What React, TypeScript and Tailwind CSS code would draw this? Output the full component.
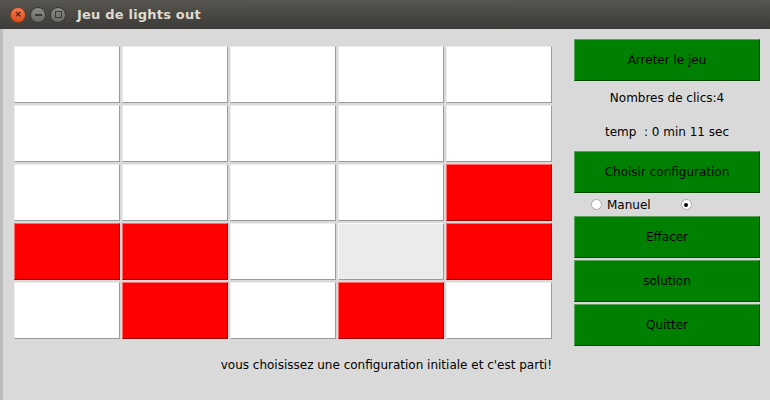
import React from 'react';

// 0 = off (white), 1 = on (red), 2 = hovered cell
const grid: number[][] = [
  [0, 0, 0, 0, 0],
  [0, 0, 0, 0, 0],
  [0, 0, 0, 0, 1],
  [1, 1, 0, 2, 1],
  [0, 1, 0, 1, 0],
];

const Cell: React.FC<{ state: number }> = ({ state }) => {
  if (state === 1) {
    return <div className="h-[57px] w-[106px] bg-[#ff0000] border border-t-[#ff6b6b] border-l-[#ff6b6b] border-b-[#9a0000] border-r-[#9a0000]" />;
  }
  if (state === 2) {
    return <div className="h-[57px] w-[106px] bg-[#ebebeb] border border-t-[#f8f8f8] border-l-[#f8f8f8] border-b-[#9a9a9a] border-r-[#9a9a9a]" />;
  }
  return <div className="h-[57px] w-[106px] bg-white border border-t-[#ececec] border-l-[#ececec] border-b-[#9a9a9a] border-r-[#9a9a9a]" />;
};

const GreenButton: React.FC<{ label: string }> = ({ label }) => (
  <button className="h-[42px] w-[186px] bg-[#008000] border border-t-[#5aa35a] border-l-[#5aa35a] border-b-[#004a00] border-r-[#004a00] text-black text-[12px] flex items-center justify-center">
    {label}
  </button>
);

const Radio: React.FC<{ checked?: boolean }> = ({ checked }) => (
  <span className="w-[11px] h-[11px] rounded-full bg-white border border-[#a8a8a8] flex items-center justify-center">
    {checked && <span className="w-[4px] h-[4px] rounded-full bg-black" />}
  </span>
);

const App: React.FC = () => {
  return (
    <div className="w-[770px] h-[400px] flex flex-col bg-[#d9d9d9] overflow-hidden" style={{ fontFamily: '"DejaVu Sans", sans-serif' }}>
      {/* title bar */}
      <div className="h-[29px] flex items-center bg-gradient-to-b from-[#57554f] to-[#3c3b37] shrink-0">
        <div className="flex items-center gap-[4px] pl-[10px]">
          <span className="w-[16px] h-[16px] rounded-full bg-gradient-to-b from-[#f37b4e] to-[#df4a16] border border-[#8f3a1a] flex items-center justify-center text-[#4a1c0c] text-[9px] font-bold leading-none">×</span>
          <span className="w-[16px] h-[16px] rounded-full bg-gradient-to-b from-[#8d8b86] to-[#6a6964] border border-[#3a3935] flex items-center justify-center">
            <span className="w-[7px] h-[2px] bg-[#3a3935]" />
          </span>
          <span className="w-[16px] h-[16px] rounded-full bg-gradient-to-b from-[#8d8b86] to-[#6a6964] border border-[#3a3935] flex items-center justify-center">
            <span className="w-[7px] h-[7px] border border-[#3a3935]" />
          </span>
        </div>
        <span className="ml-[11px] text-[#dfdbd2] text-[13px] font-bold tracking-[0.2px]">Jeu de lights out</span>
      </div>

      {/* body */}
      <div className="flex-1 flex border-l-[3px] border-[#bdbdbd] pl-[11px] pt-[10px]">
        <div className="flex flex-col pt-[7px]">
          <div className="grid grid-cols-[repeat(5,106px)] gap-x-[2px] gap-y-[2px]">
            {grid.map((row, r) => row.map((s, c) => <Cell key={`${r}-${c}`} state={s} />))}
          </div>
          <div className="mt-[19px] text-right text-[12px] text-black leading-[15px]">
            vous choisissez une configuration initiale et c'est parti!
          </div>
        </div>

        <div className="ml-[22px] flex flex-col w-[186px]">
          <GreenButton label="Arreter le jeu" />
          <div className="h-[34px] flex items-center justify-center text-[12px] text-black">Nombres de clics:4</div>
          <div className="h-[33px] flex items-center justify-center text-[12px] text-black">temp&nbsp; : 0 min 11 sec</div>
          <div className="mt-[3px]">
            <GreenButton label="Choisir configuration" />
          </div>
          <div className="h-[23px] flex items-center text-[12px] text-black">
            <span className="ml-[17px]"><Radio /></span>
            <span className="ml-[5px]">Manuel</span>
            <span className="ml-[30px]"><Radio checked /></span>
          </div>
          <div className="flex flex-col gap-[2px]">
            <GreenButton label="Effacer" />
            <GreenButton label="solution" />
            <GreenButton label="Quitter" />
          </div>
        </div>
      </div>
    </div>
  );
};

export default App;
